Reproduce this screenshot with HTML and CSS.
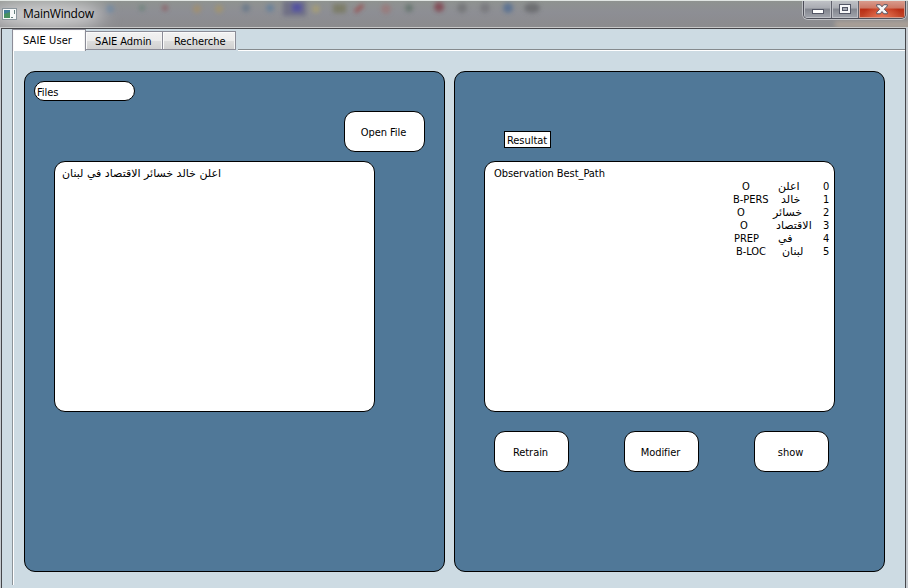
FILE: index.html
```html
<!DOCTYPE html>
<html lang="en">
<head>
<meta charset="utf-8">
<title>MainWindow</title>
<link rel="stylesheet" href="styles.css">
</head>
<body>
<div class="window">
  <header class="titlebar">
    <svg class="glass" width="908" height="28" viewBox="0 0 908 28" aria-hidden="true">
      <defs>
        <filter id="soft" x="-50%" y="-50%" width="200%" height="200%"><feGaussianBlur stdDeviation="2"/></filter>
        <filter id="glow" x="-30%" y="-80%" width="160%" height="260%"><feGaussianBlur stdDeviation="9"/></filter>
      </defs>
      <g filter="url(#soft)" opacity=".75">
        <circle cx="110" cy="8" r="4" fill="#6683a0"/>
        <circle cx="142" cy="7" r="3" fill="#668078"/>
        <circle cx="165" cy="7" r="3" fill="#8d5960"/>
        <circle cx="197" cy="8" r="4" fill="#a58f68"/>
        <circle cx="219" cy="8" r="4" fill="#a59468"/>
        <circle cx="246" cy="7" r="4" fill="#647488"/>
        <circle cx="270" cy="7" r="4" fill="#617e9c"/>
        <rect x="283" y="0" width="23" height="15" fill="#666681"/>
        <rect x="292" y="2" width="10" height="9" fill="#433fa5"/>
        <circle cx="316" cy="8" r="4" fill="#aaa070"/>
        <rect x="333" y="3" width="13" height="9" fill="#77775a"/>
        <path d="M355 11l8-7" stroke="#9b4545" stroke-width="4"/>
        <circle cx="386" cy="8" r="5" fill="#9c7777"/>
        <circle cx="409" cy="7" r="4" fill="#5e7068"/>
        <circle cx="439" cy="6" r="5" fill="#813b46"/>
        <circle cx="462" cy="7" r="5" fill="#707173"/>
        <circle cx="485" cy="7" r="5" fill="#747579"/>
        <circle cx="508" cy="7" r="5" fill="#4d6b93"/>
        <ellipse cx="532" cy="7" rx="8" ry="5" fill="#646568"/>
        <rect x="835" y="20" width="80" height="7" fill="#b5a79a"/>
      </g>
      <ellipse cx="46" cy="14" rx="58" ry="12" fill="#d5d5d5" filter="url(#glow)"/>
    </svg>
    <svg class="app-icon" width="15" height="12" viewBox="0 0 15 12" aria-hidden="true">
      <rect x=".5" y=".5" width="14" height="11" fill="#f7f9f9" stroke="#8b969d"/>
      <rect x="2" y="2" width="6" height="8" fill="#3e7c98"/>
      <path d="M2 10V6l6-2v6z" fill="#479061"/>
      <path d="M9 9h2v1H9zm3-7h1v4h-1z" fill="#66817e"/>
    </svg>
    <span class="title">MainWindow</span>
    <div class="controls">
      <div class="control">
        <svg width="14" height="7" viewBox="0 0 14 7"><rect x="1.5" y="1.5" width="11" height="4" fill="#fff" stroke="#535665"/></svg>
      </div>
      <div class="control maximize">
        <svg width="12" height="11" viewBox="0 0 12 11"><rect x=".5" y=".5" width="11" height="9" fill="#f7f7f9" stroke="#535665"/><rect x="3.5" y="3.5" width="5" height="3" fill="#a7aab4" stroke="#535665"/></svg>
      </div>
      <div class="control close">
        <svg width="12" height="11" viewBox="0 0 12 11"><path d="M.7.7h3.5L6 2.8 7.800.7h3.500v1.300L8.300 5.200l3 3v1.600H7.800L6 7.500 4.200 9.800H.7V8.200l3-3-3-3z" fill="#f6f6f6" stroke="#555463"/></svg>
      </div>
    </div>
  </header>
  <main class="client">
    <nav class="tabs">
      <div class="tab active">SAIE User</div>
      <div class="tab admin">SAIE Admin</div>
      <div class="tab search">Recherche</div>
      <div class="tab-line"></div>
    </nav>
    <div class="pane">
      <section class="panel files">
        <div class="files-label">Files</div>
        <button class="button open">Open File</button>
        <div class="text-box source"><p class="arabic" dir="rtl">اعلن خالد خسائر الاقتصاد في لبنان</p></div>
      </section>
      <section class="panel results">
        <div class="result-label">Resultat</div>
        <div class="text-box output">
          <div class="heading">Observation Best_Path</div>
          <div class="row row-0"><span>O</span><span class="word">اعلن</span><span class="index">0</span></div>
          <div class="row row-1"><span>B-PERS</span><span class="word">خالد</span><span class="index">1</span></div>
          <div class="row row-2"><span>O</span><span class="word">خسائر</span><span class="index">2</span></div>
          <div class="row row-3"><span>O</span><span class="word">الاقتصاد</span><span class="index">3</span></div>
          <div class="row row-4"><span>PREP</span><span class="word">في</span><span class="index">4</span></div>
          <div class="row row-5"><span>B-LOC</span><span class="word">لبنان</span><span class="index">5</span></div>
        </div>
        <div class="actions">
          <button class="button">Retrain</button>
          <button class="button">Modifier</button>
          <button class="button">show</button>
        </div>
      </section>
    </div>
  </main>
</div>
</body>
</html>
```
FILE: styles.css
```css
* { box-sizing: border-box; }
body {
  margin: 0;
  overflow: hidden;
  font: 11px/13px "DejaVu Sans Condensed", "DejaVu Sans", sans-serif;
  letter-spacing: -0.05px;
  color: #000;
}
.window { width: 908px; height: 588px; background: #c5cacf; }
.titlebar {
  position: relative;
  display: flex;
  height: 28px;
  background: linear-gradient(#8f9390, #8d8e94 45%, #8b8b8d);
  border-top: 1px solid #e0e5e2;
  border-bottom: 1px solid #c9c9c9;
  overflow: hidden;
}
.glass { position: absolute; top: 0; left: 0; }
.app-icon { position: relative; margin: 7px 0 0 2px; }
.title {
  position: relative;
  margin: 5px 0 0 6px;
  font: 12px/16px "Open Sans", sans-serif;
  letter-spacing: -0.25px;
}
.controls {
  position: relative;
  display: flex;
  width: 103px;
  height: 19px;
  margin: -1px 2px 0 auto;
  border: 1px solid #4d4e58;
  border-top: 0;
  border-radius: 0 0 5px 5px;
  box-shadow: 0 0 0 1px #bfc1c5;
  overflow: hidden;
}
.control {
  display: flex;
  width: 28px;
  justify-content: center;
  padding-top: 8px;
  background: linear-gradient(#c2c4c8, #a9abb2 45%, #82858e 50%, #a2a5ad);
  border-right: 1px solid #60616c;
  box-shadow: inset 0 0 0 1px #bec0c6;
}
.maximize { width: 27px; padding-top: 4px; }
.close {
  flex: 1;
  padding-top: 4px;
  background: radial-gradient(ellipse at 50% 100%, #eb7958, transparent 60%), linear-gradient(#dba092, #cb7764 45%, #b92d14 50%, #c34a2d);
  border-right: 0;
  box-shadow: inset 0 0 0 1px #d69c8c;
}
.client {
  width: 905px;
  height: 560px;
  margin-left: 1px;
  padding: 0 0 0 10px;
  background: #cddbe3;
  border: 1px solid #45464a;
  border-bottom: 0;
}
.tabs { display: flex; height: 22px; align-items: flex-end; }
.tab {
  height: 19px;
  padding: 3px 0 0 9px;
  background: linear-gradient(#f2f2f2, #ececec 50%, #dddddd 52%, #d0d0d0);
  border: 1px solid #8b8c97;
  border-left: 0;
  margin-bottom: 1px;
  box-shadow: inset 1px 1px #fafafa, inset -1px 0 #f3f3f3;
}
.tab.active {
  width: 74px;
  height: 22px;
  padding: 4px 0 0 10px;
  margin-bottom: 0;
  background: #fff;
  border-left: 1px solid #8b8c97;
  border-bottom: 0;
  letter-spacing: 0.1px;
}
.admin { width: 77px; }
.search { width: 73px; padding-left: 11px; }
.tab-line { flex: 1; height: 2px; margin-left: 2px; border-top: 1px solid #858a8e; border-bottom: 1px solid #fff; }
.pane {
  display: flex;
  gap: 9px;
  height: 534px;
  padding: 20px 0 0 11px;
  border-left: 1px solid #8c9398;
  box-shadow: inset 1px 0 #fff;
}
.panel {
  height: 501px;
  background: #507898;
  border: 1px solid #000;
  border-radius: 11px;
}
.files { display: flex; width: 421px; padding: 9px; flex-direction: column; align-items: flex-start; }
.files-label {
  width: 101px;
  height: 20px;
  padding: 4px 2px 0;
  background: #fff;
  border: 1px solid #000;
  border-radius: 10px;
}
.button {
  display: flex;
  width: 75px;
  height: 41px;
  align-items: center;
  justify-content: center;
  padding: 1px 2px 0 0;
  background: #fff;
  border: 1px solid #000;
  border-radius: 11px;
  color: #000;
  font: inherit;
  letter-spacing: inherit;
}
.open { width: 81px; margin: 10px 0 0 310px; }
.text-box {
  height: 251px;
  padding: 5px 7px;
  background: #fff;
  border: 1px solid #000;
  border-radius: 11px;
}
.source { width: 321px; margin: 9px 0 0 20px; }
.arabic { width: max-content; margin: 0; letter-spacing: 0; font-family: "DejaVu Sans", sans-serif; font-size: 11px; }
.results { width: 431px; padding: 59px 29px 0; }
.result-label {
  width: 47px;
  height: 17px;
  margin-left: 20px;
  padding: 2px 0 0 2px;
  background: #fff;
  border: 1px solid #000;
}
.output { width: 351px; margin-top: 13px; padding: 5px 4px 0 9px; }
.row { display: grid; height: 13px; margin-left: 239px; white-space: nowrap; }
.row-0 { grid-template-columns: 36px 45px 7px; padding-left: 9px; }
.row-1 { grid-template-columns: 48px 42px 7px; }
.row-2 { grid-template-columns: 36px 50px 7px; padding-left: 4px; }
.row-3 { grid-template-columns: 36px 47px 7px; padding-left: 7px; }
.row-4 { grid-template-columns: 44px 45px 7px; padding-left: 1px; }
.row-5 { grid-template-columns: 46px 41px 7px; padding-left: 3px; }
.word { letter-spacing: 0; font-family: "DejaVu Sans", sans-serif; font-size: 11px; }
.actions { display: flex; margin: 19px 0 0 10px; gap: 55px; }
.actions .button { flex: none; }
```
